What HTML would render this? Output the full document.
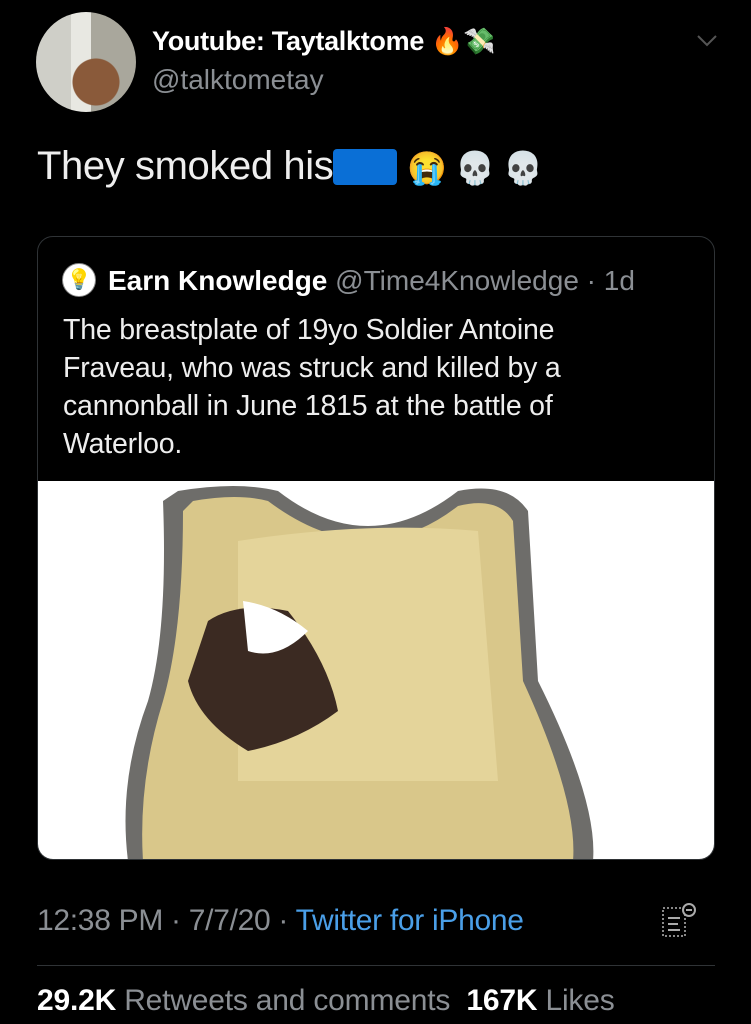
<!DOCTYPE html>
<html><head><meta charset="utf-8"><style>
body{margin:0;width:751px;height:1024px;background:#000;overflow:hidden;font-family:"Liberation Sans",sans-serif;color:#fff;position:relative}
.a{position:absolute;white-space:nowrap}
</style></head><body>
<div class="a" style="left:36px;top:12px;width:100px;height:100px;border-radius:50%;background:radial-gradient(circle at 60% 70%,#8a5a3a 0 25%,transparent 26%),linear-gradient(90deg,#cfcfc8 0 35%,#e8e8e2 35% 55%,#a9a79c 55%);"></div>
<div class="a" style="left:152px;top:26px;font-size:27px;font-weight:bold;letter-spacing:-0.3px">Youtube: Taytalktome <span style="font-size:26px">🔥💸</span></div>
<div class="a" style="left:152px;top:64px;font-size:28px;color:#8b8f94">@talktometay</div>
<svg class="a" style="left:696px;top:34px" width="22" height="14"><path d="M2 2 L11 11 L20 2" stroke="#555" stroke-width="2" fill="none"/></svg>
<div class="a" style="left:37px;top:144px;font-size:40px;font-weight:300;color:#eee;letter-spacing:-0.4px">They smoked his<span style="display:inline-block;width:64px;height:36px;background:#0a6fd6;vertical-align:-6px;border-radius:4px;margin-right:10px"></span><span style="font-size:32px">😭 💀 💀</span></div>
<div class="a" style="left:37px;top:236px;width:676px;height:622px;border:1px solid #2f3336;border-radius:16px;overflow:hidden">
 <div class="a" style="left:24px;top:26px;width:32px;height:32px;border-radius:50%;background:#fff;border:1px solid #888;text-align:center;line-height:32px;font-size:20px">💡</div>
 <div class="a" style="left:70px;top:28px;font-size:28px;letter-spacing:0px"><b>Earn Knowledge</b> <span style="color:#8b8f94">@Time4Knowledge · 1d</span></div>
 <div class="a" style="left:25px;top:74px;font-size:28.5px;line-height:38px;color:#eee;letter-spacing:-0.2px">The breastplate of 19yo Soldier Antoine<br>Fraveau, who was struck and killed by a<br>cannonball in June 1815 at the battle of<br>Waterloo.</div>
 <svg class="a" style="left:0;top:244px" width="678" height="380">
  <rect width="678" height="380" fill="#fff"/>
  <path d="M140 10 Q200 0 240 10 Q330 80 420 10 Q470 0 490 30 L500 200 Q560 320 555 380 L90 380 Q80 300 110 220 Q130 150 125 20 Z" fill="#6e6d6a"/>
  <path d="M155 20 Q200 12 230 20 Q330 95 420 25 Q460 15 475 40 L485 200 Q540 320 535 380 L105 380 Q100 300 125 220 Q145 150 145 30 Z" fill="#d9c78a"/>
  <path d="M200 60 Q330 40 440 50 L460 300 L200 300 Z" fill="#e4d49a"/>
  <path d="M170 140 Q200 120 250 130 Q290 180 300 230 Q260 260 210 270 Q160 240 150 200 Z" fill="#3b2a22"/>
  <path d="M205 120 Q240 125 270 150 Q240 180 210 170 Z" fill="#fff"/>
 </svg>
</div>
<div class="a" style="left:37px;top:904px;font-size:30px;color:#8b8f94;letter-spacing:-0.3px">12:38 PM · 7/7/20 · <span style="color:#4a9fe8">Twitter for iPhone</span></div>
<svg class="a" style="left:660px;top:898px" width="40" height="44"><rect x="3" y="10" width="22" height="28" stroke="#888" stroke-width="2" stroke-dasharray="2 2" fill="none"/><path d="M8 20h12M8 26h10M8 32h12" stroke="#aaa" stroke-width="2"/><circle cx="29" cy="12" r="6" stroke="#aaa" stroke-width="2" fill="#000"/><path d="M26 12h6" stroke="#aaa" stroke-width="2"/></svg>
<div class="a" style="left:37px;top:965px;width:678px;height:1px;background:#2f3336"></div>
<div class="a" style="left:37px;top:984px;font-size:30px;color:#8b8f94;letter-spacing:-0.2px"><b style="color:#fff">29.2K</b> Retweets and comments &nbsp;<b style="color:#fff">167K</b> Likes</div>
</body></html>
